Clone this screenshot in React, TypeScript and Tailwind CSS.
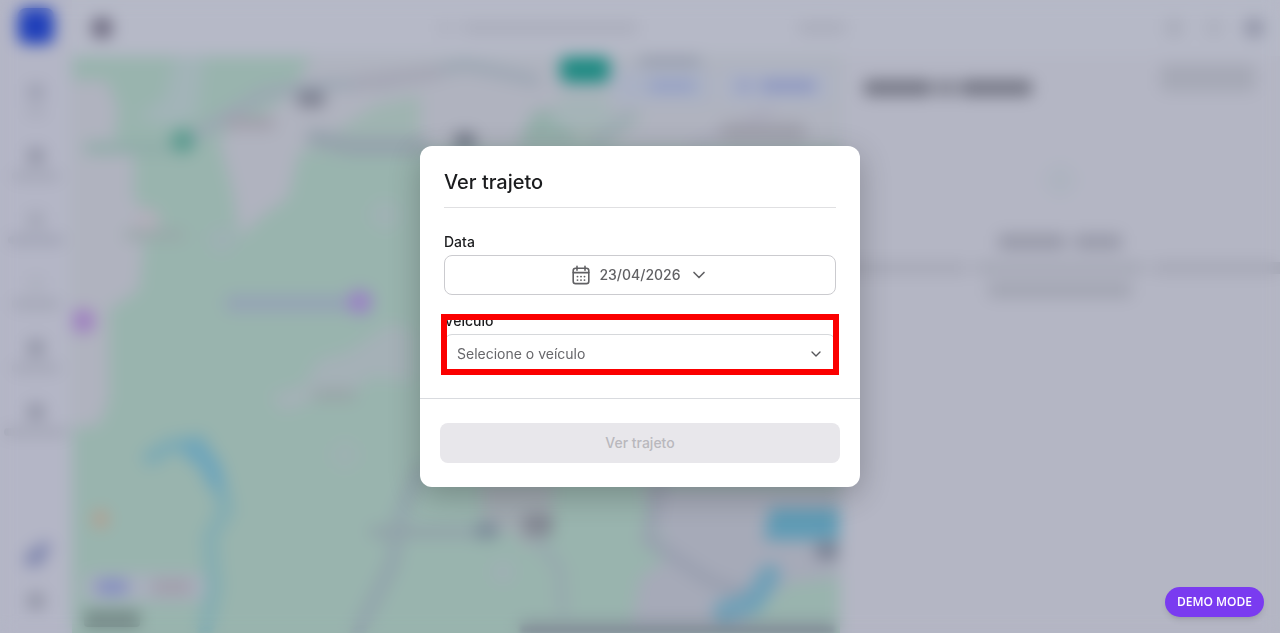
import { ChevronDown } from 'lucide-react';

const navItems = [
  { id: 'home', icon: 'bg-[#9c9fb0]', label: 'w-5 bg-[#a5a8b7]' },
  { id: 'tracking', icon: 'bg-[#9093a4]', label: 'w-12 bg-[#a0a3b2]' },
  { id: 'vehicles', icon: 'bg-[#a2a5b4]', label: 'w-14 bg-[#9c9fb0]' },
  { id: 'drivers', icon: 'bg-[#adb0be]', label: 'w-12 bg-[#9fa2b1]' },
  { id: 'reports', icon: 'bg-[#9093a4]', label: 'w-12 bg-[#a0a3b2]' },
  { id: 'maintenance', icon: 'bg-[#9093a4]', label: 'w-16 bg-[#a0a3b2]' },
];

function CalendarIcon() {
  return (
    <svg width="20" height="20" viewBox="0 0 20 20" fill="none" stroke="currentColor" strokeWidth="1.6" strokeLinecap="round" strokeLinejoin="round" aria-hidden="true">
      <rect x="2.2" y="3.2" width="15.6" height="15.4" rx="2.4" />
      <path d="M2.2 7.6h15.6M6 1.4v3.8M14 1.4v3.8" />
      <g fill="currentColor" stroke="none">
        <circle cx="6.5" cy="11.6" r="0.95" />
        <circle cx="10" cy="11.6" r="0.95" />
        <circle cx="13.5" cy="11.6" r="0.95" />
        <circle cx="6.5" cy="15.1" r="0.95" />
        <circle cx="10" cy="15.1" r="0.95" />
        <circle cx="13.5" cy="15.1" r="0.95" />
      </g>
    </svg>
  );
}

function Sidebar() {
  return (
    <aside className="flex w-[72px] shrink-0 flex-col items-center bg-[#b4b6c6] pt-2 pb-6">
      <div className="h-9 w-9 rounded-lg bg-[#1f3fba]" />
      <div className="mt-10 flex flex-col gap-8">
        {navItems.map((item) => (
          <div key={item.id} className="flex h-8 flex-col items-center justify-between">
            <div className={`h-4 w-4 rounded ${item.icon}`} />
            <div className={`h-2 rounded ${item.label}`} />
          </div>
        ))}
      </div>
      <div className="mt-auto flex flex-col items-center gap-6">
        <svg width="36" height="30" viewBox="0 0 36 30" aria-hidden="true">
          <path d="M12 22L27 8" stroke="#878db4" strokeWidth="12" strokeLinecap="round" />
          <circle cx="18" cy="18" r="9" fill="#7f86ad" />
        </svg>
        <div className="h-4 w-4 rounded bg-[#9093a4]" />
      </div>
    </aside>
  );
}

function TopBar() {
  return (
    <header className="flex h-14 shrink-0 items-center justify-between bg-[#b6b9c7] pr-4 pl-5">
      <div className="h-5 w-5 rounded-md bg-[#6e6b81]" />
      <div className="flex w-[416px] items-center justify-between pl-2">
        <div className="flex gap-2">
          <div className="h-3 w-4 rounded bg-[#adb0be]" />
          <div className="h-3 w-44 rounded bg-[#aaadbb]" />
        </div>
        <div className="h-3 w-12 rounded bg-[#a9acba]" />
      </div>
      <div className="flex gap-5">
        <div className="h-5 w-5 rounded-full bg-[#a9acba]" />
        <div className="h-5 w-5 rounded-full bg-[#adb0be]" />
        <div className="h-5 w-5 rounded-full bg-[#9194a7]" />
      </div>
    </header>
  );
}

function MapView() {
  return (
    <div className="relative min-w-0 flex-1 overflow-hidden bg-[#99b4ae]">
      <svg className="h-full w-full blur-[2px]" viewBox="72 56 768 577" preserveAspectRatio="xMidYMid slice" aria-hidden="true">
        {/* urban areas */}
        <g fill="#b0b3bf">
          <path d="M60 80h47l12 30-5 25 20 20v45l22 20-12 25-5 45-30 20v90l-10 25-39 5z" />
          <path d="M175 56h30l-8 60-22 10-40-8 30-20z" fill="#a2b4b8" />
          <path d="M320 40h540v110H300l-12 48-28 20-20 20-8-50-14-50 70-40z" />
          <path d="M270 395l35-10 12-25 30-8 45-30 20 10v50l-40-5-20 15-40 10-30 10z" fill="#a5b1b7" />
          <path d="M640 487h220v100l-70-5-60 50H630l10-55 30-20-15-40z" fill="#a6aab8" />
          <path d="M480 480h75l-5 50-20 20-20-20-25 8z" fill="#a1a9b0" />
          <circle cx="345" cy="455" r="16" fill="#9db2b1" />
          <circle cx="385" cy="215" r="15" fill="#a0b2b4" />
          <circle cx="222" cy="240" r="14" fill="#9eb1b4" />
          <circle cx="503" cy="572" r="12" fill="#9fb0b4" />
          <circle cx="148" cy="220" r="12" fill="#b3afbb" />
        </g>
        {/* parks */}
        <g fill="#9fb4b1">
          <path d="M315 145l60-40 45-10v60h-115z" />
          <path d="M520 138l15-28h25l20 36h-60z" fill="#93aea9" />
          <path d="M575 115h70l-40 35h-30z" fill="#a2b3b2" />
          <path d="M560 95h50v30h-60z" fill="#a5b4b8" />
        </g>
        {/* roads */}
        <g fill="none" stroke="#9ca6b3" strokeLinecap="round">
          <path d="M180 145l40-25 45-27 60-8 60-2 80-18 70 15" strokeWidth="11" />
          <path d="M360 83l75-10" strokeWidth="14" stroke="#a4a6b4" />
          <path d="M90 148h85" stroke="#90ada9" strokeWidth="12" />
          <path d="M315 138l35 8h70" stroke="#95a2ac" strokeWidth="18" />
          <path d="M420 470l-18 40-10 55-35 68" strokeWidth="14" stroke="#93a5ac" />
          <path d="M375 532h115" strokeWidth="12" stroke="#92a2a9" />
          <path d="M535 535l25 35 3 40" strokeWidth="11" stroke="#98a9ae" />
          <path d="M660 480l-12 60 60 40 40 15" stroke="#999faf" strokeWidth="12" />
          <path d="M630 115l-35 28" strokeWidth="12" stroke="#9dabb3" />
          <path d="M690 150l80-40" stroke="#a9a9bb" strokeWidth="8" />
        </g>
        {/* water */}
        <g fill="none" stroke="#7caab5" strokeLinecap="round" strokeLinejoin="round">
          <path d="M150 458l20-12 30-4 8 20 12 25 6 25" strokeWidth="15" />
          <path d="M192 450l18 14 5 15" strokeWidth="19" stroke="#6ea5bb" />
          <path d="M226 508l-16 30 3 35 2 12-13 60" strokeWidth="15" stroke="#84adb2" />
          <path d="M770 575l-18 28-28 8" strokeWidth="22" stroke="#70a0b7" />
        </g>
        <path d="M770 508h80v32h-86z" fill="#5f9bb5" />
        {/* places */}
        <g>
          <circle cx="183" cy="141" r="12" fill="#5b9b8f" />
          <rect x="560" y="56" width="50" height="27" rx="8" fill="#1d8a82" />
          <rect x="297" y="91" width="28" height="16" rx="6" fill="#7d8090" />
          <rect x="455" y="133" width="20" height="16" rx="5" fill="#6c7383" />
          <rect x="225" y="116" width="50" height="14" rx="5" fill="#a2a0ac" />
          <rect x="125" y="230" width="60" height="10" rx="4" fill="#99a7a9" />
          <rect x="225" y="296" width="125" height="15" rx="5" fill="#95a2b6" />
          <circle cx="360" cy="302" r="12" fill="#9a80c6" />
          <circle cx="83" cy="321" r="12" fill="#9e7dc0" />
          <rect x="312" y="389" width="44" height="12" rx="5" fill="#98a5a7" />
          <rect x="94" y="511" width="13" height="16" rx="4" fill="#ba9b8b" />
          <rect x="476" y="522" width="22" height="17" rx="5" fill="#7b8b99" />
          <rect x="523" y="514" width="30" height="22" rx="6" fill="#838792" />
          <rect x="640" y="56" width="60" height="9" fill="#9297a9" />
          <rect x="720" y="122" width="86" height="20" rx="7" fill="#a0a1ad" />
          <rect x="816" y="543" width="22" height="16" rx="5" fill="#777d90" />
          <path d="M795 583l60-8v42h-70z" fill="#99b4ae" />
          <rect x="520" y="622" width="315" height="20" fill="#838d98" />
        </g>
      </svg>
      <div className="absolute top-3 right-2 flex gap-2">
        <div className="flex h-9 w-[100px] items-center justify-center gap-3 rounded-lg bg-[#abb2c3]">
          <div className="h-3 w-2 rounded bg-[#a4adc7]" />
          <div className="h-3 w-12 rounded bg-[#949fc5]" />
        </div>
        <div className="flex h-9 w-28 items-center justify-center gap-2 rounded-lg bg-[#adb3c4]">
          <div className="h-3 w-4 rounded bg-[#949dc5]" />
          <div className="h-3 w-14 rounded bg-[#8b95c1]" />
        </div>
      </div>
      <div className="absolute bottom-1.5 left-3 flex flex-col gap-2.5">
        <div className="flex h-7 w-[120px] items-center justify-around rounded-lg bg-[#a9b0bd]">
          <div className="h-4 w-8 rounded bg-[#868fc0]" />
          <div className="h-4 w-10 rounded bg-[#a29fac]" />
        </div>
        <div className="h-4 w-14 rounded bg-[#748786]" />
      </div>
    </div>
  );
}

function TripPanel() {
  return (
    <section className="w-[440px] shrink-0 bg-[#b4b6c4]">
      <div className="flex justify-between px-6 pt-2">
        <div className="mt-4 flex h-4 items-center gap-1">
          <div className="h-4 w-[68px] rounded bg-[#757785]" />
          <div className="h-4 w-5 rounded bg-[#858794]" />
          <div className="h-4 w-[72px] rounded bg-[#757785]" />
        </div>
        <div className="h-7 w-24 rounded-md bg-[#a6a9b6]" />
      </div>
      <div className="mt-[68px] flex flex-col items-center">
        <div className="h-8 w-8 rounded-full bg-[#aeb4c0]" />
        <div className="mt-[38px] flex gap-2">
          <div className="h-4 w-[68px] rounded bg-[#989aa9]" />
          <div className="h-4 w-12 rounded bg-[#999baa]" />
        </div>
        <div className="mt-3 flex h-3 w-full justify-between gap-2">
          <div className="flex-3 bg-[#a6a8b6]" />
          <div className="flex-4 bg-[#a5a8b5]" />
          <div className="flex-3 bg-[#a5a7b5]" />
        </div>
        <div className="mt-2 h-4 w-36 rounded bg-[#a2a5b2]" />
      </div>
    </section>
  );
}

function TripDialog() {
  return (
    <div role="dialog" aria-modal="true" aria-labelledby="dialog-title" className="w-full max-w-[440px] rounded-xl bg-white shadow-[0_8px_32px_rgba(0,0,0,0.24)]">
      <div className="px-6 pt-6">
        <h2 id="dialog-title" className="border-b border-[#e0e0e2] pb-[13px] text-xl leading-6 font-medium text-[#1b1c1e]">
          Ver trajeto
        </h2>
      </div>
      <form id="trip-form" className="flex flex-col gap-4 px-6 py-6">
        <div className="flex flex-col gap-1">
          <label htmlFor="trip-date" className="text-sm leading-[19px] font-medium text-[#1b1c1e]">
            Data
          </label>
          <button id="trip-date" type="button" className="flex h-10 items-center justify-center gap-2 rounded-lg border border-[#cbcbcf] text-sm font-medium text-[#616164]">
            <CalendarIcon />
            <span>23/04/2026</span>
            <ChevronDown className="h-5 w-5" />
          </button>
        </div>
        <div className="relative flex flex-col gap-1">
          <label htmlFor="trip-vehicle" className="text-sm leading-[19px] font-medium text-[#1b1c1e]">
            Veículo
          </label>
          <div className="relative">
            <select id="trip-vehicle" defaultValue="" className="h-10 w-full appearance-none rounded-lg border border-[#d6d8db] bg-white px-3 text-sm text-[#66666a]">
              <option value="">Selecione o veículo</option>
            </select>
            <ChevronDown className="pointer-events-none absolute top-3 right-3 h-4 w-4 text-[#56565a]" />
          </div>
          <div className="pointer-events-none absolute -inset-x-[3px] top-[3px] -bottom-px border-6 border-[#fb0000]" />
        </div>
      </form>
      <div className="border-t border-[#d9dbdf] px-5 py-6">
        <button type="submit" form="trip-form" disabled className="h-10 w-full rounded-lg bg-[#e8e7eb] text-sm font-medium text-[#b9b8bd]">
          Ver trajeto
        </button>
      </div>
    </div>
  );
}

export default function App() {
  return (
    <main className="relative h-screen overflow-hidden bg-[#b4b6c4] font-['Inter',sans-serif]">
      <div className="flex h-full" aria-hidden="true">
        <Sidebar />
        <div className="flex min-w-0 flex-1 flex-col">
          <TopBar />
          <div className="flex min-h-0 flex-1">
            <MapView />
            <TripPanel />
          </div>
        </div>
      </div>
      <div className="fixed inset-0 flex items-center justify-center backdrop-blur-[8px]">
        <TripDialog />
      </div>
      <button type="button" className="fixed right-4 bottom-4 h-[30px] rounded-full bg-[#7a3bf0] px-3 font-['Open_Sans',sans-serif] text-xs font-semibold text-white shadow-md">
        DEMO MODE
      </button>
    </main>
  );
}
